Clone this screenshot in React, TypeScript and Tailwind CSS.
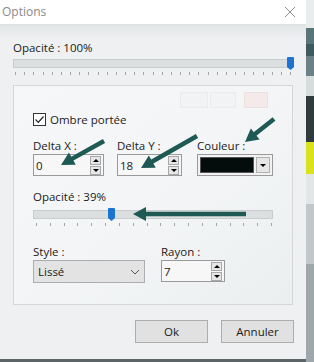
import React from 'react';

const font = { fontFamily: '"Open Sans", "Noto Sans", Arial, sans-serif' };

const Arrow: React.FC<{ x1: number; y1: number; x2: number; y2: number }> = ({ x1, y1, x2, y2 }) => {
  const a = Math.atan2(y2 - y1, x2 - x1);
  const len = 13;
  const half = 7;
  const bx = x2 - len * Math.cos(a);
  const by = y2 - len * Math.sin(a);
  const px = -Math.sin(a) * half;
  const py = Math.cos(a) * half;
  return (
    <g fill="#1f5954" stroke="#1f5954">
      <line x1={x1} y1={y1} x2={bx + Math.cos(a)} y2={by + Math.sin(a)} strokeWidth={4.5} />
      <polygon points={`${x2},${y2} ${bx + px},${by + py} ${bx - px},${by - py}`} stroke="none" />
    </g>
  );
};

const Spinner: React.FC = () => (
  <div className="flex flex-col gap-[1px]">
    <div className="w-[11px] h-[9px] bg-[#e6e6e6] border border-[#a8a8a8] flex items-center justify-center">
      <div className="w-0 h-0 border-l-[3px] border-r-[3px] border-b-[3px] border-l-transparent border-r-transparent border-b-black" />
    </div>
    <div className="w-[11px] h-[9px] bg-[#e6e6e6] border border-[#a8a8a8] flex items-center justify-center">
      <div className="w-0 h-0 border-l-[3px] border-r-[3px] border-t-[3px] border-l-transparent border-r-transparent border-t-black" />
    </div>
  </div>
);

const SpinInput: React.FC<{ value: string; width: string }> = ({ value, width }) => (
  <div className={`${width} h-[22px] border border-[#9a9a9a] bg-[#f7f7f7] flex items-center justify-between pl-[2px] pr-[2px]`}>
    <span>{value}</span>
    <Spinner />
  </div>
);

const Slider: React.FC<{ width: number; thumb: number; ticks: number; tickStart: number; tickEnd: number }> = ({ width, thumb, ticks, tickStart, tickEnd }) => (
  <div className="relative" style={{ width }}>
    <div className="h-[9px] bg-[#dcdfe0] border border-[#c9cdce]" />
    <div className="absolute top-[-2px] w-[7px] h-[13px]" style={{ left: thumb }}>
      <svg width="7" height="13" viewBox="0 0 7 13">
        <path d="M0 1 Q0 0 1 0 H6 Q7 0 7 1 V10 L3.5 13 L0 10 Z" fill="#1c73d0" />
      </svg>
    </div>
    <div className="relative h-[5px] mt-[4px]">
      {Array.from({ length: ticks }).map((_, i) => (
        <div
          key={i}
          className="absolute top-0 w-px h-[3px] bg-[#9fa4a6]"
          style={{ left: tickStart + ((tickEnd - tickStart) * i) / (ticks - 1) }}
        />
      ))}
    </div>
  </div>
);

export default function App() {
  return (
    <div className="relative w-[314px] h-[362px] flex overflow-hidden text-[11.5px] text-[#1b1b1b]" style={font}>
      <div className="w-[306px] h-full flex flex-col bg-[#eef0f1] border-b-[3px] border-[#5d6467]">
        <div className="h-[25px] bg-white flex items-center justify-between pl-[2px] pr-[10px] border-b border-[#dfe2e3]">
          <span className="text-[#8a8a8a] text-[12px]">Options</span>
          <svg width="12" height="12" viewBox="0 0 12 12">
            <path d="M1 1 L11 11 M11 1 L1 11" stroke="#8d8d8d" strokeWidth="1" />
          </svg>
        </div>
        <div className="bg-gradient-to-b from-[#e2e5e6] to-[#eef0f1] h-[14px]" />
        <div className="pl-[13px]">
          <div className="leading-[16px] mt-[1px]">Opacité : 100%</div>
          <div className="mt-[3px]">
            <Slider width={281} thumb={274} ticks={31} tickStart={2} tickEnd={277} />
          </div>
        </div>
        <div className="ml-[13px] mt-[8px] w-[280px] h-[220px] border border-[#d3d7d9] bg-gradient-to-br from-[#f6f7f8] via-[#f3f5f6] to-[#eceff0] flex flex-col pl-[19px]">
          <div className="flex justify-end gap-[2px] pr-[24px] mt-[6px] opacity-30">
            <div className="w-[28px] h-[16px] border border-[#d6d6d6] bg-[#f0f0f0]" />
            <div className="w-[26px] h-[16px] border border-[#d6d6d6] bg-[#f0f0f0]" />
            <div className="w-[24px] h-[16px] ml-[6px] border border-[#e8b0a8] bg-[#f6d4cd]" />
          </div>
          <div className="flex items-center gap-[4px] mt-[3px]">
            <div className="w-[13px] h-[13px] border border-[#333] bg-white flex items-center justify-center">
              <svg width="11" height="11" viewBox="0 0 11 11">
                <path d="M1.5 5.5 L4.3 8.3 L9.5 2.5" stroke="#222" strokeWidth="1.2" fill="none" />
              </svg>
            </div>
            <span>Ombre portée</span>
          </div>
          <div className="flex mt-[10px]">
            <div className="flex flex-col w-[84px]">
              <span className="leading-[16px]">Delta X :</span>
              <SpinInput value="0" width="w-[71px]" />
            </div>
            <div className="flex flex-col w-[80px]">
              <span className="leading-[16px]">Delta Y :</span>
              <SpinInput value="18" width="w-[65px]" />
            </div>
            <div className="flex flex-col">
              <span className="leading-[16px]">Couleur :</span>
              <div className="w-[76px] h-[22px] border border-[#9a9a9a] bg-[#f2f2f2] flex items-center p-[2px] gap-[2px]">
                <div className="flex-1 h-full bg-[#050d0c] border border-[#555]" />
                <div className="w-[14px] h-full bg-[#e6e6e6] border border-[#b0b0b0] flex items-center justify-center">
                  <div className="w-0 h-0 border-l-[3px] border-r-[3px] border-t-[3px] border-l-transparent border-r-transparent border-t-black" />
                </div>
              </div>
            </div>
          </div>
          <div className="leading-[16px] mt-[13px]">Opacité : 39%</div>
          <div className="mt-[5px]">
            <Slider width={240} thumb={75} ticks={18} tickStart={3} tickEnd={238} />
          </div>
          <div className="flex mt-[16px]">
            <div className="flex flex-col w-[128px]">
              <span className="leading-[16px]">Style :</span>
              <div className="w-[112px] h-[23px] border border-[#adadad] bg-[#e3e3e3] flex items-center justify-between pl-[4px] pr-[4px]">
                <span>Lissé</span>
                <svg width="10" height="6" viewBox="0 0 10 6">
                  <path d="M1 1 L5 5 L9 1" stroke="#555" strokeWidth="1" fill="none" />
                </svg>
              </div>
            </div>
            <div className="flex flex-col">
              <span className="leading-[16px]">Rayon :</span>
              <SpinInput value="7" width="w-[64px]" />
            </div>
          </div>
        </div>
        <div className="flex justify-end gap-[13px] pr-[12px] mt-[15px]">
          <button className="w-[73px] h-[23px] border border-[#adadad] bg-[#e1e1e1]">Ok</button>
          <button className="w-[73px] h-[23px] border border-[#adadad] bg-[#e1e1e1]">Annuler</button>
        </div>
        <div className="flex-1" />
      </div>
      <div className="w-[8px] h-full flex flex-col">
        <div className="h-[28px] bg-[#e9eded]" />
        <div className="h-[16px] bg-[#59757a]" />
        <div className="h-[12px] bg-[#3e5a5f]" />
        <div className="h-[20px] bg-[#6c8085]" />
        <div className="h-[20px] bg-[#d7dcdd]" />
        <div className="h-[46px] bg-[#2f3b3e]" />
        <div className="h-[32px] bg-[#d9e21f]" />
        <div className="h-[30px] bg-[#e3e6e6]" />
        <div className="h-[60px] bg-[#c2c8ca]" />
        <div className="flex-1 bg-[#9ea7ab]" />
      </div>
      <svg className="absolute inset-0 pointer-events-none" width="314" height="362">
        <Arrow x1={104} y1={141} x2={61} y2={165} />
        <Arrow x1={197} y1={136} x2={141} y2={168} />
        <Arrow x1={274} y1={119} x2={245} y2={142} />
        <Arrow x1={246} y1={214} x2={133} y2={214} />
      </svg>
    </div>
  );
}
